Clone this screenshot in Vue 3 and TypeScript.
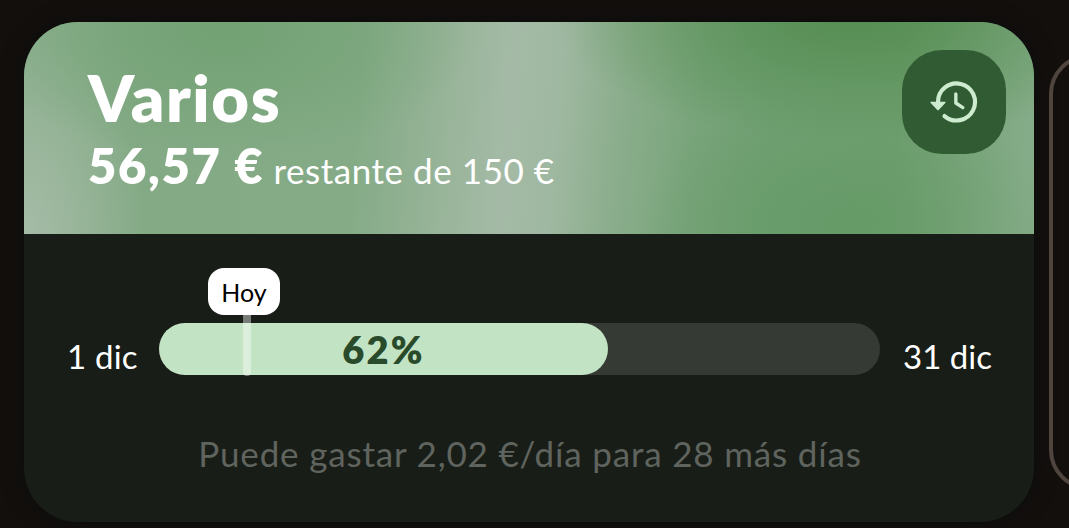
<script setup lang="ts">
const budget = {
  name: 'Varios',
  left: '56,57 €',
  suffix: 'restante de 150 €',
  start: '1 dic',
  end: '31 dic',
  percent: 62,
  fill: 62.3,
  today: 12.2,
  hint: 'Puede gastar 2,02 €/día para 28 más días',
}
</script>

<template>
  <main class="screen">
    <section class="card">
      <header class="head">
        <div class="titles">
          <h1 class="name"><span>{{ budget.name }}</span></h1>
          <p class="amount"><strong>{{ budget.left }}</strong><span class="rest">{{ budget.suffix }}</span></p>
        </div>
        <button class="history" type="button">
          <svg viewBox="0 0 312 312" fill="none" stroke="#cdeccf" stroke-linecap="round" stroke-linejoin="round">
            <path d="M108 156a55.5 55.5 0 1 1 19.500 42.200" stroke-width="12.500" />
            <path d="M87 157h42l-21 22z" fill="#cdeccf" stroke-width="4" />
            <path d="M161.500 132v27l21 14" stroke-width="10" />
          </svg>
        </button>
      </header>
      <div class="body">
        <div class="timeline">
          <span class="date start">{{ budget.start }}</span>
          <div class="track">
            <div class="fill" :style="{ width: budget.fill + '%' }"><span class="pct">{{ budget.percent }}%</span></div>
            <div class="today" :style="{ left: budget.today + '%' }"></div>
            <div class="tip"><span>Hoy</span></div>
          </div>
          <span class="date end">{{ budget.end }}</span>
        </div>
        <p class="hint"><span>{{ budget.hint }}</span></p>
      </div>
    </section>
    <section class="next"></section>
  </main>
</template>

<style>
body { margin: 0; background: #130f0d; }
</style>

<style scoped>
.screen {
  width: 1069px;
  height: 528px;
  box-sizing: border-box;
  padding: 22px 0 0 24px;
  display: flex;
  gap: 15px;
  overflow: hidden;
  background: #130f0d;
  color: #fff;
  font-family: Lato, "Liberation Sans", sans-serif;
}
.card {
  flex: 0 0 1010px;
  height: 500px;
  border-radius: 54px;
  overflow: hidden;
  background: #181e17;
  box-shadow: 0 0 18px 3px #0d0e0d;
}
.head {
  height: 212px;
  box-sizing: border-box;
  padding: 27.5px 28px 0 64px;
  display: flex;
  justify-content: space-between;
  background:
    radial-gradient(ellipse 300px 130px at 830px -10px, rgba(82, 139, 78, .9), rgba(82, 139, 78, 0)),
    radial-gradient(ellipse 210px 130px at 825px 200px, rgba(96, 151, 97, .65), rgba(96, 151, 97, 0)),
    radial-gradient(ellipse 250px 130px at 200px 10px, rgba(112, 161, 114, .9), rgba(112, 161, 114, 0)),
    radial-gradient(ellipse 120px 200px at 0 212px, #a5bba6, rgba(165, 187, 166, 0)),
    linear-gradient(95deg, #8db090 0, #84aa85 130px, #84ab86 340px, #98b499 430px, #a4baa6 490px, #9fb8a1 540px, #8aad8b 605px, #78a47a 680px, #70a073 750px, #6f9f70 880px, #85ac88 1010px);
}
.titles { padding-top: 11.5px; }
.name {
  margin: 0;
  font-size: 65px;
  font-weight: 800;
  line-height: 72px;
  letter-spacing: 1.6px;
}
.amount {
  margin: 2px 0 0;
  line-height: 60px;
  white-space: nowrap;
}
.amount strong { font-size: 49px; font-weight: 800; letter-spacing: 1.6px; }
.rest { margin-left: 9px; font-size: 35px; letter-spacing: .55px; }
.history {
  width: 104px;
  height: 104px;
  padding: 0;
  border: 0;
  border-radius: 40px;
  background: #315c33;
}
.history svg { display: block; width: 104px; height: 104px; }
.body { padding: 89px 41px 0 43px; }
.timeline { display: flex; justify-content: space-between; }
.date {
  width: 92px;
  padding-top: 7px;
  font-size: 33px;
  line-height: 52px;
  white-space: nowrap;
}
.end { width: 90px; }
.start { letter-spacing: .2px; }
.track {
  position: relative;
  width: 721px;
  height: 52px;
  margin-right: 23px;
  border-radius: 26px;
  background: #353a34;
}
.fill {
  height: 52px;
  border-radius: 26px;
  background: #c3e3c5;
  color: #294b2b;
  text-align: center;
}
.pct { font-size: 38px; font-weight: 800; line-height: 52px; letter-spacing: 2.2px; }
.today {
  position: absolute;
  top: -8px;
  width: 8px;
  height: 61px;
  margin-left: -4px;
  border-radius: 0 0 4px 4px;
  background: rgba(255, 255, 255, .42);
}
.tip {
  position: absolute;
  left: 49px;
  top: -55px;
  width: 72px;
  height: 47px;
  border-radius: 16px;
  background: #fff;
  color: #000;
  font-size: 25px;
  line-height: 48px;
  text-align: center;
}
.hint {
  margin: 46px 0 0;
  font-size: 35px;
  line-height: 50px;
  letter-spacing: .82px;
  text-align: center;
  color: #60645f;
  white-space: nowrap;
}
.next {
  flex: 0 0 300px;
  height: 436px;
  box-sizing: border-box;
  margin-top: 32px;
  border: 4px solid #50453e;
  border-radius: 40px;
}
</style>
